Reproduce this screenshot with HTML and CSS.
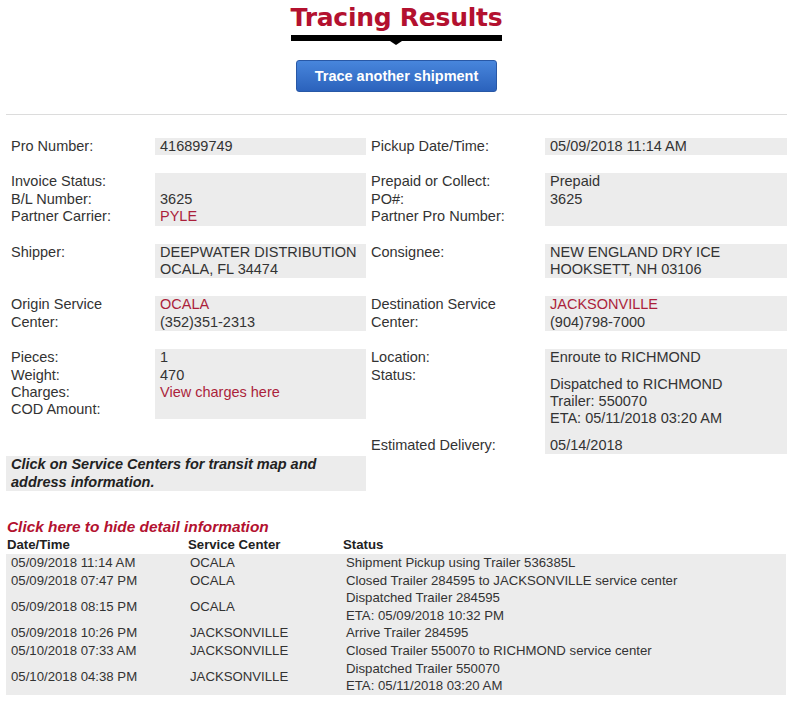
FILE: index.html
```html
<html><head><title>Tracing Results</title>
<link rel="stylesheet" href="styles.css">
</head>
<body>

<div class="page">

  <div class="masthead">
    <h1 class="page-title">Tracing Results</h1>
    <a class="trace-btn" href="#">Trace another shipment</a>
  </div>

  <div class="divider"></div>

  <!-- shipment summary, two label/value pairs per row -->
  <div class="details">
    <div class="row">
      <div class="label">Pro Number:</div>
      <div class="value">416899749</div>
      <div class="label">Pickup Date/Time:</div>
      <div class="value">05/09/2018 11:14 AM</div>
    </div>

    <div class="row">
      <div class="label">Invoice Status:<br>B/L Number:<br>Partner Carrier:</div>
      <div class="value">&nbsp;<br>3625<br><a href="#">PYLE</a></div>
      <div class="label">Prepaid or Collect:<br>PO#:<br>Partner Pro Number:</div>
      <div class="value">Prepaid<br>3625<br>&nbsp;</div>
    </div>

    <div class="row">
      <div class="label">Shipper:</div>
      <div class="value">DEEPWATER DISTRIBUTION<br>OCALA, FL 34474</div>
      <div class="label">Consignee:</div>
      <div class="value">NEW ENGLAND DRY ICE<br>HOOKSETT, NH 03106</div>
    </div>

    <div class="row">
      <div class="label">Origin Service<br>Center:</div>
      <div class="value"><a href="#">OCALA</a><br>(352)351-2313</div>
      <div class="label">Destination Service<br>Center:</div>
      <div class="value"><a href="#">JACKSONVILLE</a><br>(904)798-7000</div>
    </div>

    <div class="row">
      <div class="label">Pieces:<br>Weight:<br>Charges:<br>COD Amount:</div>
      <div class="value">1<br>470<br><a href="#">View charges here</a><br>&nbsp;</div>
      <div class="label label-stack">
        <div>Location:<br>Status:</div>
        <div class="label-bottom">Estimated Delivery:</div>
      </div>
      <div class="value">
        <div>Enroute to RICHMOND</div>
        <div class="spaced">Dispatched to RICHMOND<br>Trailer: 550070<br>ETA: 05/11/2018 03:20 AM</div>
        <div class="spaced">05/14/2018</div>
      </div>
    </div>

    <div class="row row-tight">
      <div class="note">Click on Service Centers for transit map and address information.</div>
    </div>
  </div>

  <a class="toggle-link" href="#">Click here to hide detail information</a>

  <table class="history">
    <colgroup>
      <col class="col-date">
      <col class="col-center">
      <col>
    </colgroup>
    <thead>
      <tr><th>Date/Time</th><th>Service Center</th><th>Status</th></tr>
    </thead>
    <tbody>
      <tr><td>05/09/2018 11:14 AM</td><td>OCALA</td><td>Shipment Pickup using Trailer 536385L</td></tr>
      <tr><td>05/09/2018 07:47 PM</td><td>OCALA</td><td>Closed Trailer 284595 to JACKSONVILLE service center</td></tr>
      <tr><td>05/09/2018 08:15 PM</td><td>OCALA</td><td>Dispatched Trailer 284595<br>ETA: 05/09/2018 10:32 PM</td></tr>
      <tr><td>05/09/2018 10:26 PM</td><td>JACKSONVILLE</td><td>Arrive Trailer 284595</td></tr>
      <tr><td>05/10/2018 07:33 AM</td><td>JACKSONVILLE</td><td>Closed Trailer 550070 to RICHMOND service center</td></tr>
      <tr><td>05/10/2018 04:38 PM</td><td>JACKSONVILLE</td><td>Dispatched Trailer 550070<br>ETA: 05/11/2018 03:20 AM</td></tr>
    </tbody>
  </table>

</div>

</body></html>
```

FILE: styles.css
```css
:root {
  --text: #333;
  --red: #b3112f;
  --link: #ab1f3b;
  --box: #ececec;
}

body {
  margin: 0;
  background: #fff;
  color: var(--text);
  font-family: "Liberation Sans", Arial, sans-serif;
}

a {
  color: var(--link);
  text-decoration: none;
}

.page {
  width: 781px;
  margin-left: 6px;
}

/* header */
.masthead {
  display: flex;
  flex-direction: column;
  align-items: center;
}

.page-title {
  position: relative;
  margin: 3px 0 0;
  padding-bottom: 2px;
  border-bottom: 6px solid #000;
  font: bold 25px/30px "DejaVu Sans", Verdana, sans-serif;
  letter-spacing: -0.25px;
  color: var(--red);
}

.page-title::after {
  content: "";
  position: absolute;
  left: 50%;
  bottom: -10px;
  margin-left: -6px;
  border-top: 4px solid #000;
  border-left: 6px solid transparent;
  border-right: 6px solid transparent;
}

.trace-btn {
  display: block;
  box-sizing: border-box;
  width: 201px;
  height: 32px;
  margin-top: 19px;
  border: 1px solid #2858a6;
  border-radius: 3px;
  background: linear-gradient(#4886dc, #2b62bc);
  color: #fff;
  font-weight: bold;
  font-size: 14.5px;
  line-height: 30px;
  text-align: center;
}

.divider {
  height: 1px;
  margin-top: 22px;
  background: #dcdcdc;
}

/* detail grid */
.details {
  padding-top: 5px;
  font-size: 14.5px;
  line-height: 17.4px;
}

.row {
  display: grid;
  grid-template-columns: 149px 211px 179px 242px;
  align-items: start;
  margin-top: 18px;
}

.row-tight {
  margin-top: 2px;
}

.label {
  padding-left: 5px;
}

.label-stack {
  align-self: stretch;
  display: flex;
  flex-direction: column;
}

.label-bottom {
  margin-top: auto;
}

.value {
  padding-left: 5px;
  background: var(--box);
}

.spaced {
  margin-top: 9px;
}

.note {
  grid-column: 1 / 3;
  padding-left: 5px;
  background: var(--box);
  font-weight: bold;
  font-style: italic;
  color: #222;
}

/* history table */
.toggle-link {
  display: block;
  margin-top: 27px;
  padding-left: 1px;
  color: var(--red);
  font-weight: bold;
  font-style: italic;
  font-size: 15.4px;
  line-height: 18px;
}

.history {
  width: 780px;
  border-collapse: collapse;
  table-layout: fixed;
  font-size: 13.2px;
}

.col-date { width: 180px; }
.col-center { width: 156px; }

.history th {
  padding: 0 0 0 1px;
  text-align: left;
  font-weight: bold;
  line-height: 18px;
  color: #222;
}

.history th:nth-child(2) {
  padding-left: 2px;
}

.history tbody {
  background: var(--box);
}

.history td {
  padding: 0 0 0 4px;
  line-height: 17.6px;
  vertical-align: middle;
}

.history td:first-child {
  padding-left: 5px;
}
```
